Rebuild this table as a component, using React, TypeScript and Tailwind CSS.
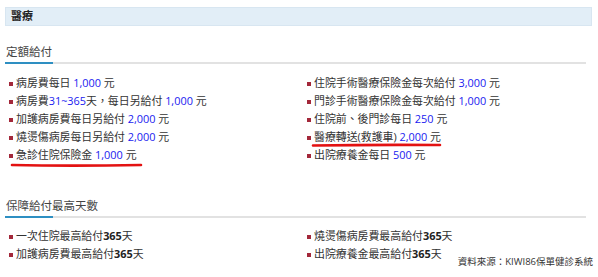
import React from "react";

const FONT = { fontFamily: '"Open Sans", "Noto Sans CJK TC", sans-serif' };

function Bullet() {
  return (
    <span className="inline-block w-[4px] h-[4px] bg-[#a3283a] mr-[3px] shrink-0 translate-y-[1px]" />
  );
}

function Item({ children }: { children: React.ReactNode }) {
  return (
    <div className="flex items-center h-[18px] pl-[4px] whitespace-nowrap">
      <Bullet />
      <span>{children}</span>
    </div>
  );
}

const B = ({ children }: { children: React.ReactNode }) => (
  <span className="text-[#1a1af0]">{children}</span>
);

const K = ({ children }: { children: React.ReactNode }) => (
  <span className="font-bold text-[#222]">{children}</span>
);

function Title({ children }: { children: React.ReactNode }) {
  return (
    <div>
      <div className="h-[16px] leading-[16px] text-[11.5px] text-[#444] pl-[1px]">{children}</div>
      <div className="mt-[2px] h-[2px] bg-[#e2e2e2] mr-[6px] flex">
        <div className="w-[48px] h-[2px] bg-[#2e8fc2]" />
      </div>
    </div>
  );
}

export default function App() {
  return (
    <div className="w-[598px] h-[277px] bg-white text-[#333] text-[10.9px] overflow-hidden" style={FONT}>
      <div className="ml-[5px] mr-[6px] pt-[7px]">
        <div className="h-[19px] bg-[#e2eef7] border border-[#d8e6f1] flex items-center pl-[5px] font-bold text-[11px] text-[#222]">
          醫療
        </div>

        <div className="mt-[18px]">
          <Title>定額給付</Title>
        </div>

        <div className="mt-[10px] grid grid-cols-[298px_1fr]">
          <div className="relative">
            <Item>病房費每日 <B>1,000</B> 元</Item>
            <Item>病房費<B>31~365</B>天，每日另給付 <B>1,000</B> 元</Item>
            <Item>加護病房費每日另給付 <B>2,000</B> 元</Item>
            <Item>燒燙傷病房每日另給付 <B>2,000</B> 元</Item>
            <Item>急診住院保險金 <B>1,000</B> 元</Item>
            <svg className="absolute left-[5px] top-[88px]" width="134" height="6" viewBox="0 0 134 6">
              <path d="M2 3 Q 60 4.2 131 3" stroke="#e31212" strokeWidth="2.6" fill="none" strokeLinecap="round" />
            </svg>
          </div>
          <div className="relative">
            <Item>住院手術醫療保險金每次給付 <B>3,000</B> 元</Item>
            <Item>門診手術醫療保險金每次給付 <B>1,000</B> 元</Item>
            <Item>住院前、後門診每日 <B>250</B> 元</Item>
            <Item>醫療轉送(救護車) <B>2,000</B> 元</Item>
            <Item>出院療養金每日 <B>500</B> 元</Item>
            <svg className="absolute left-[8px] top-[68px]" width="134" height="6" viewBox="0 0 134 6">
              <path d="M2 3.5 Q 60 2.6 129 3" stroke="#e31212" strokeWidth="2.6" fill="none" strokeLinecap="round" />
            </svg>
          </div>
        </div>

        <div className="mt-[34px]">
          <Title>保障給付最高天數</Title>
        </div>

        <div className="mt-[9px] grid grid-cols-[298px_1fr]">
          <div>
            <Item>一次住院最高給付<K>365</K>天</Item>
            <Item>加護病房費最高給付<K>365</K>天</Item>
          </div>
          <div>
            <Item>燒燙傷病房費最高給付<K>365</K>天</Item>
            <Item>出院療養金最高給付<K>365</K>天</Item>
          </div>
        </div>
        <div className="-mt-[8px] flex justify-end text-[9.5px] text-[#333] leading-[14px] -mr-[1px]">
          資料來源：KIWI86保單健診系統
        </div>
      </div>
    </div>
  );
}
